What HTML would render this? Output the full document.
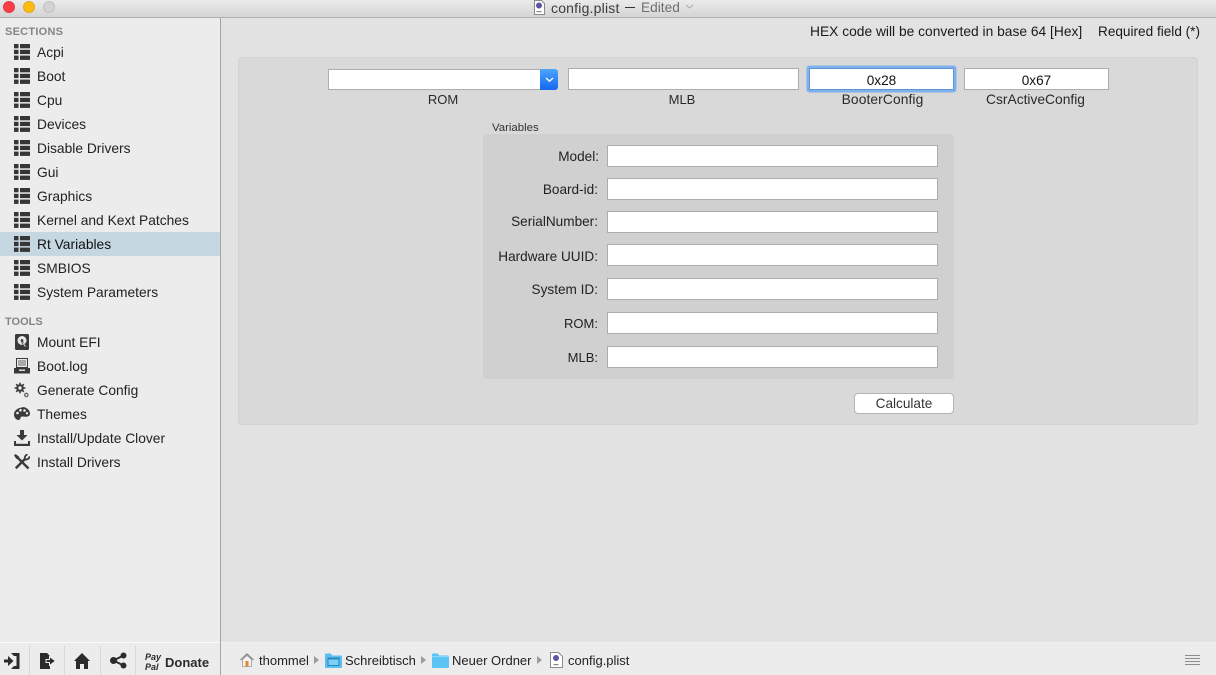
<!DOCTYPE html>
<html>
<head>
<meta charset="utf-8">
<style>
html,body{margin:0;padding:0}
body{width:1216px;height:675px;position:relative;overflow:hidden;background:#e2e2e2;font-family:"Liberation Sans",sans-serif;font-size:13px;color:#1c1c1c}
div,span,svg{position:absolute;box-sizing:border-box}
.t{white-space:nowrap;line-height:16px;margin-top:1px}
.s{font-size:13.6px}
.c{text-align:center}
.r{text-align:right}
.f{background:#fff;border:1px solid #adadad}
.h{font-size:11px;font-weight:bold;color:#858585;line-height:14px;left:5px;margin-top:1px}
.i{left:37px;white-space:nowrap;line-height:16px;color:#222;font-size:13.8px;margin-top:1px}
.sep{top:646px;width:1px;height:29px;background:#d8d8d8}
</style>
</head>
<body>
<!-- title bar -->
<div style="left:0;top:0;width:1216px;height:18px;background:linear-gradient(#ebebeb,#d4d4d4);border-bottom:1px solid #b1b1b1"></div>
<div style="left:3px;top:1px;width:12px;height:12px;border-radius:50%;background:#fc3d48;border:1px solid #e23a42"></div>
<div style="left:23px;top:1px;width:12px;height:12px;border-radius:50%;background:#fdbc0f;border:1px solid #e0a81c"></div>
<div style="left:43px;top:1px;width:12px;height:12px;border-radius:50%;background:#d3d3d3;border:1px solid #c0c0c0"></div>
<svg style="left:533px;top:0" width="13" height="15" viewBox="0 0 13 15"><path d="M1.5.5h7l3 3v11h-10z" fill="#fff" stroke="#8a8a8a"/><circle cx="6" cy="5.500" r="3" fill="#5a55a5"/><rect x="3.500" y="11" width="5" height="1.200" fill="#888"/></svg>
<div class="t" style="left:551px;top:-1px;color:#3c3c3c;font-size:14px;letter-spacing:.2px">config.plist</div>
<div style="left:625px;top:7px;width:10px;height:1px;background:#333"></div>
<div class="t" style="left:641px;top:-1px;color:#6f6f6f;font-size:13.7px">Edited</div>
<svg style="left:685px;top:4px" width="9" height="6" viewBox="0 0 9 6"><path d="M1 1l3.500 3L8 1" fill="none" stroke="#a8a8a8"/></svg>

<!-- sidebar -->
<div style="left:0;top:18px;width:221px;height:657px;background:#ececec;border-right:1px solid #a5a5a5"></div>
<div style="left:0;top:232px;width:220px;height:24px;background:#c5d7e0"></div>
<div class="h" style="top:24px;letter-spacing:.25px">SECTIONS</div>
<div class="h" style="top:314px">TOOLS</div>

<svg style="left:14px;top:44px" width="16" height="256" viewBox="0 0 16 256" fill="#363636">
<defs><g id="l"><rect width="4.500" height="4.300"/><rect x="6" width="10" height="4.300"/><rect y="5.800" width="4.500" height="4.300"/><rect x="6" y="5.800" width="10" height="4.300"/><rect y="11.600" width="4.500" height="4.300"/><rect x="6" y="11.600" width="10" height="4.300"/></g></defs>
<use href="#l"/><use href="#l" y="24"/><use href="#l" y="48"/><use href="#l" y="72"/><use href="#l" y="96"/><use href="#l" y="120"/><use href="#l" y="144"/><use href="#l" y="168"/><use href="#l" y="192"/><use href="#l" y="216"/><use href="#l" y="240"/>
</svg>

<div class="i" style="top:44px">Acpi</div>
<div class="i" style="top:68px">Boot</div>
<div class="i" style="top:92px">Cpu</div>
<div class="i" style="top:116px">Devices</div>
<div class="i" style="top:140px">Disable Drivers</div>
<div class="i" style="top:164px">Gui</div>
<div class="i" style="top:188px">Graphics</div>
<div class="i" style="top:212px">Kernel and Kext Patches</div>
<div class="i" style="top:236px;color:#111">Rt Variables</div>
<div class="i" style="top:260px">SMBIOS</div>
<div class="i" style="top:284px">System Parameters</div>

<div class="i" style="top:334px">Mount EFI</div>
<div class="i" style="top:358px">Boot.log</div>
<div class="i" style="top:382px">Generate Config</div>
<div class="i" style="top:406px">Themes</div>
<div class="i" style="top:430px">Install/Update Clover</div>
<div class="i" style="top:454px">Install Drivers</div>

<!-- tool icons -->
<svg style="left:14px;top:334px" width="16" height="16" viewBox="0 0 16 16"><rect x="1" y="0" width="14" height="16" rx="1.500" fill="#3a3a3a"/><circle cx="8" cy="6.500" r="4.500" fill="#e8e8e8"/><circle cx="8" cy="6.500" r="1.400" fill="#3a3a3a"/><path d="M8 8l3.500 5" stroke="#3a3a3a" stroke-width="2"/><path d="M8.500 8.500l3 4" stroke="#eee" stroke-width="1"/></svg>
<svg style="left:14px;top:358px" width="16" height="16" viewBox="0 0 16 16"><path d="M2.500.500h11v9h-11z" fill="#ececec" stroke="#3a3a3a"/><path d="M4 3h8M4 5h8M4 7h8" stroke="#666"/><path d="M0 10h16v5.500H0z" fill="#3a3a3a"/><rect x="5" y="11.500" width="6" height="1.500" fill="#ddd"/></svg>
<svg style="left:14px;top:382px" width="16" height="16" viewBox="0 0 16 16"><path d="M6 .6v10.800M.6 6h10.800M2.200 2.200l7.600 7.600M9.800 2.200l-7.600 7.600" stroke="#3a3a3a" stroke-width="1.500"/><circle cx="6" cy="6" r="3.800" fill="#3a3a3a"/><circle cx="6" cy="6" r="1.700" fill="#ececec"/><circle cx="12.300" cy="13" r="1.700" fill="#ececec" stroke="#666" stroke-width="1.300"/></svg>
<svg style="left:14px;top:406px" width="16" height="16" viewBox="0 0 16 16"><path d="M8.500 1.500C4 1.500 0 4.500 0 8.500c0 3.300 2.500 5.500 4.500 5.500 2 0 1.500-2 2.500-3 1-.8 2.500-.3 4.500-.3 2.500 0 4.500-1 4.500-3 0-3.500-3.500-6.700-7.500-6.700z" fill="#3a3a3a"/><circle cx="3.500" cy="7" r="1.300" fill="#ececec"/><circle cx="6.500" cy="4.200" r="1.300" fill="#ececec"/><circle cx="10.500" cy="4.500" r="1.300" fill="#ececec"/><circle cx="13" cy="7.300" r="1.200" fill="#ececec"/></svg>
<svg style="left:14px;top:430px" width="16" height="16" viewBox="0 0 16 16" fill="#3a3a3a"><path d="M6 0h4v5h3.500L8 10.500 2.500 5H6z"/><rect x="0" y="13.800" width="16" height="2.200"/><rect x="0" y="11" width="2" height="4"/><rect x="14" y="11" width="2" height="4"/></svg>
<svg style="left:14px;top:454px" width="16" height="16" viewBox="0 0 16 16" fill="none" stroke="#3a3a3a"><path d="M3 3l11.500 11.500" stroke-width="2.500"/><path d="M0 1.500L1.500 0l3.500 2.500v2.500H2.500z" fill="#3a3a3a" stroke="none"/><path d="M11.500 4.500L1.800 14.200" stroke-width="2.500"/><path d="M15.700 2.300a4 4 0 0 1-4.700 3.200M11 5.500A4 4 0 0 1 13.500.3" stroke-width="1.800"/></svg>

<!-- sidebar bottom -->
<div style="left:0;top:642px;width:220px;height:33px;background:#ececec;border-top:1px solid #fafafa"></div>
<div class="sep" style="left:29px"></div>
<div class="sep" style="left:64px"></div>
<div class="sep" style="left:100px"></div>
<div class="sep" style="left:135px"></div>
<svg style="left:4px;top:653px" width="16" height="16" viewBox="0 0 16 16" fill="#2b2b2b"><path d="M7 0h8.500v16H7l3-3h2.500V3H10z"/><path d="M0 6.500h4V3l5.500 5L4 13V9.500H0z"/></svg>
<svg style="left:40px;top:653px" width="16" height="16" viewBox="0 0 16 16" fill="#2b2b2b"><path d="M0 0h7l3 3v13H0z"/><path d="M6 6.500h3.500V3.500L15.500 8l-6 4.500V9.500H6z" stroke="#ececec"/></svg>
<svg style="left:74px;top:653px" width="16" height="16" viewBox="0 0 16 16" fill="#2b2b2b"><path d="M8 0l8 8h-2v8h-4v-5H6v5H2V8H0z"/></svg>
<svg style="left:110px;top:652px" width="17" height="17" viewBox="0 0 17 17" fill="#2b2b2b"><circle cx="13.500" cy="3.500" r="3"/><circle cx="13.500" cy="13.500" r="3"/><circle cx="3.500" cy="8.500" r="3.500"/><path d="M3.500 8.500l10-5M3.500 8.500l10 5" stroke="#2b2b2b" stroke-width="2"/></svg>
<div class="t" style="left:145px;top:652px;margin-top:0;font-size:9px;font-style:italic;font-weight:bold;line-height:10px;color:#2b2b2b">Pay<br>Pal</div>
<div class="t" style="left:165px;top:654px;font-weight:bold;color:#2b2b2b">Donate</div>

<!-- status bar -->
<div style="left:221px;top:642px;width:995px;height:33px;background:#ececec;border-top:1px solid #f2f2f2"></div>
<svg style="left:240px;top:653px" width="14" height="14" viewBox="0 0 14 14"><path d="M.5 7L7 1l6.500 6" fill="none" stroke="#8a8a8a" stroke-width="1.200"/><path d="M2.500 6.500v7h9v-7L7 2.500z" fill="#f4f4f4" stroke="#999" stroke-width=".8"/><rect x="5.500" y="8" width="3" height="5.500" fill="#e8862a"/></svg>
<div class="t" style="left:259px;top:652px;color:#222">thommel</div>
<svg style="left:313px;top:656px" width="7" height="8"><path d="M1 0l5 4-5 4z" fill="#9a9a9a"/></svg>
<svg style="left:325px;top:652px" width="17" height="16" viewBox="0 0 17 16"><path d="M0 2.500a1 1 0 0 1 1-1h5l1 2h9a1 1 0 0 1 1 1V15a1 1 0 0 1-1 1H1a1 1 0 0 1-1-1z" fill="#5cbdf0"/><rect x="3" y="6" width="11" height="7.500" fill="#7dd0f7" stroke="#2c86b8"/><rect x="3" y="6" width="11" height="1.500" fill="#2c86b8"/></svg>
<div class="t" style="left:345px;top:652px;color:#222">Schreibtisch</div>
<svg style="left:420px;top:656px" width="7" height="8"><path d="M1 0l5 4-5 4z" fill="#9a9a9a"/></svg>
<svg style="left:432px;top:652px" width="17" height="16" viewBox="0 0 17 16"><path d="M0 2.500a1 1 0 0 1 1-1h5l1 2h9a1 1 0 0 1 1 1V15a1 1 0 0 1-1 1H1a1 1 0 0 1-1-1z" fill="#5cc4f5"/><path d="M0 4.500h17" stroke="#8ad8fb"/></svg>
<div class="t" style="left:452px;top:652px;color:#222">Neuer Ordner</div>
<svg style="left:536px;top:656px" width="7" height="8"><path d="M1 0l5 4-5 4z" fill="#9a9a9a"/></svg>
<svg style="left:550px;top:652px" width="13" height="16" viewBox="0 0 13 16"><path d="M.5.500h8l4 4v11H.5z" fill="#fff" stroke="#8a8a8a"/><circle cx="6" cy="6" r="3" fill="#5a55a5"/><rect x="3.500" y="12" width="5" height="1.200" fill="#888"/></svg>
<div class="t" style="left:568px;top:652px;color:#222">config.plist</div>
<svg style="left:1185px;top:655px" width="16" height="10" viewBox="0 0 16 10" fill="#8c8c8c"><rect width="15" height="1" y="0"/><rect width="15" height="1" y="3"/><rect width="15" height="1" y="6"/><rect width="15" height="1" y="9"/></svg>

<!-- header text -->
<div class="t" style="left:810px;top:23px;color:#1a1a1a;font-size:13.8px">HEX code will be converted in base 64 [Hex]</div>
<div class="t s" style="left:1098px;top:23px;color:#1a1a1a">Required field (*)</div>

<!-- panel -->
<div style="left:238px;top:57px;width:960px;height:368px;background:#d9d9d9;border:1px solid #d2d2d2;border-radius:4px"></div>

<div class="f" style="left:328px;top:69px;width:221px;height:21px;border-right:0"></div>
<div style="left:540px;top:69px;width:18px;height:21px;border-radius:0 3px 3px 0;background:linear-gradient(#4da5fb,#1567f0)"></div>
<svg style="left:545px;top:77px" width="9" height="6" viewBox="0 0 9 6"><path d="M1 1l3.500 3.200L8 1" fill="none" stroke="#fff" stroke-width="1.400"/></svg>
<div class="f" style="left:568px;top:68px;width:231px;height:22px"></div>
<div class="f" style="left:809px;top:68px;width:145px;height:22px;border:1px solid #5f93d6;box-shadow:0 0 0 2.500px #7fb2ec;border-radius:1px"></div>
<div class="f" style="left:964px;top:68px;width:145px;height:22px"></div>
<div class="t c s" style="left:809px;top:72px;width:145px;color:#111">0x28</div>
<div class="t c s" style="left:964px;top:72px;width:145px;color:#111">0x67</div>
<div class="t c" style="left:328px;top:91px;width:230px;color:#2a2a2a">ROM</div>
<div class="t c" style="left:568px;top:91px;width:228px;color:#2a2a2a">MLB</div>
<div class="t c" style="left:809px;top:91px;width:147px;color:#2a2a2a;font-size:13.8px;letter-spacing:.1px">BooterConfig</div>
<div class="t c" style="left:964px;top:91px;width:143px;color:#2a2a2a;font-size:13.8px">CsrActiveConfig</div>

<div class="t" style="left:492px;top:120px;font-size:11.4px;line-height:14px;color:#333">Variables</div>
<div style="left:483px;top:134px;width:471px;height:245px;background:#d0d0d0;border-radius:4px"></div>

<div class="f" style="left:607px;top:145px;width:331px;height:22px"></div>
<div class="f" style="left:607px;top:178px;width:331px;height:22px"></div>
<div class="f" style="left:607px;top:211px;width:331px;height:22px"></div>
<div class="f" style="left:607px;top:244px;width:331px;height:22px"></div>
<div class="f" style="left:607px;top:278px;width:331px;height:22px"></div>
<div class="f" style="left:607px;top:312px;width:331px;height:22px"></div>
<div class="f" style="left:607px;top:346px;width:331px;height:22px"></div>

<div class="t r s" style="left:483px;top:148px;width:116px;color:#222">Model:</div>
<div class="t r s" style="left:483px;top:181px;width:115px;color:#222">Board-id:</div>
<div class="t r s" style="left:483px;top:213px;width:115px;color:#222">SerialNumber:</div>
<div class="t r s" style="left:483px;top:248px;width:115px;color:#222">Hardware UUID:</div>
<div class="t r s" style="left:483px;top:281px;width:115px;color:#222">System ID:</div>
<div class="t r" style="left:483px;top:315px;width:115px;color:#222">ROM:</div>
<div class="t r" style="left:483px;top:349px;width:115px;color:#222">MLB:</div>

<div class="t c s" style="left:854px;top:393px;margin-top:0;width:100px;height:21px;background:#fff;border:1px solid #b4b4b4;border-radius:4px;line-height:20px;color:#333">Calculate</div>
</body>
</html>
